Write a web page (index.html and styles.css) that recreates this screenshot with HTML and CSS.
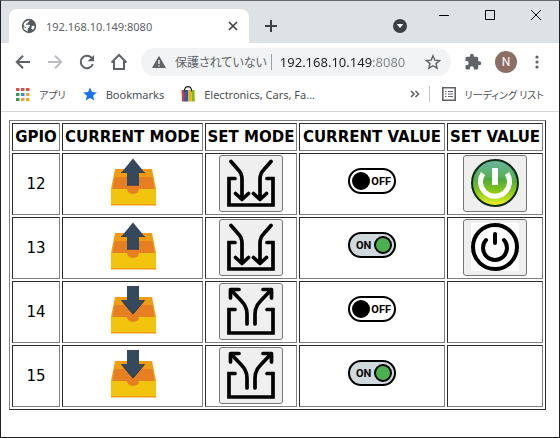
FILE: index.html
```html
<!DOCTYPE html>
<html lang="ja">
<head>
<meta charset="utf-8">
<title>192.168.10.149:8080</title>
<link rel="stylesheet" href="styles.css">
</head>
<body>
<svg class="symbols" aria-hidden="true">
  <symbol id="tray" viewBox="0 0 48 48">
    <path fill="#f39c12" d="M6 11H43L47 31V47.500H2V31Z"/>
    <path fill="#e67e22" d="M5.500 19H43.500L45 31H4Z"/>
    <path fill="#f1c40f" d="M2 31H47V46H2Z"/>
    <path fill="#e67e22" d="M18 31a6 5 0 0 0 12 0Z"/>
  </symbol>
  <symbol id="tray-up" viewBox="0 0 48 48">
    <use href="#tray"/>
    <path fill="#34495e" d="M24 .5L36 15H30V27.500H18V15H12Z"/>
    <path fill="#2c3e50" d="M12 14H18V15H12ZM30 14H36V15H30ZM18 26.500H30V27.500H18Z"/>
  </symbol>
  <symbol id="tray-down" viewBox="0 0 48 48">
    <use href="#tray"/>
    <path fill="#34495e" d="M18 0H30V14H36L24 28.500L12 14H18Z"/>
    <path fill="none" stroke="#2c3e50" d="M12.500 14.500L24 28L35.500 14.500"/>
  </symbol>
  <symbol id="mode-in" viewBox="0 0 48 48">
    <g fill="none" stroke="#000" stroke-width="3.700" stroke-linecap="round" stroke-linejoin="round">
      <path stroke-linejoin="miter" d="M8 19.500H2V46H46V19.500H40"/>
      <path d="M4 2.500L11 10.500Q15 14.500 15 20V40M8.500 34.500L15 40.500L21.500 34.500"/>
      <path d="M44 2.500L37 10.500Q33 14.500 33 20V40M39.500 34.500L33 40.500L26.500 34.500"/>
    </g>
  </symbol>
  <symbol id="mode-out" viewBox="0 0 48 48">
    <g fill="none" stroke="#000" stroke-width="3.700" stroke-linecap="round" stroke-linejoin="round">
      <path stroke-linejoin="miter" d="M8 22.500H2V46H46V22.500H40"/>
      <path d="M12 2.500H3.500V11M4 3L14 13.500Q20 19.500 20 27V37"/>
      <path d="M36 2.500H44.500V11M44 3L34 13.500Q28 19.500 28 27V37"/>
    </g>
  </symbol>
</svg>

<div class="window">
  <header class="tabstrip">
    <div class="tab">
      <svg class="favicon" viewBox="0 0 16 16"><circle cx="8" cy="8" r="7.200" fill="#55595e"/><path fill="#fff" d="M9.500 2.600c-1.200.2-1.800.7-1.700 1.500-.9.200-1.400.7-1.200 1.500H5.200L4.800 6.800H8c1 .2 1.200.9.800 1.600h-1v1.400c-.5.500-1 .7-1.200 1.300l.2 2.300C4 12.800 2.400 11 2.300 8.800l2.700 1.400V9.200H3.900L2.600 7C3 4.500 5.500 2 9.500 2.600ZM11 8c1-.3 1.700-.2 2.600.2-.1 1.600-.8 2.900-1.800 3.700-.3-.7-.6-.9-1.300-.9 0-1.200-.3-2.200.5-3Z"/></svg>
      <span class="tab-title">192.168.10.149:8080</span>
      <button class="icon-button" aria-label="Close tab"><svg width="10" height="10" viewBox="0 0 10 10"><path d="M1 1L9 9M9 1L1 9" stroke="#3c4043" stroke-width="1.600"/></svg></button>
    </div>
    <button class="icon-button new-tab" aria-label="New tab"><svg width="12" height="12" viewBox="0 0 12 12"><path d="M6 0V12M0 6H12" stroke="#3c4043" stroke-width="2"/></svg></button>
    <button class="icon-button tab-search" aria-label="Search tabs"><svg width="14" height="14" viewBox="0 0 14 14"><circle cx="7" cy="7" r="7" fill="#3c4043"/><path d="M3.800 5H10.200L7 9.200Z" fill="#fff"/></svg></button>
    <div class="window-controls">
      <button class="icon-button" aria-label="Minimize"><svg width="10" height="10" viewBox="0 0 10 10"><path d="M0 5.500H10" stroke="#000"/></svg></button>
      <button class="icon-button" aria-label="Maximize"><svg width="10" height="10" viewBox="0 0 10 10"><path d="M.5 .5H9.500V9.500H.5Z" fill="none" stroke="#000"/></svg></button>
      <button class="icon-button" aria-label="Close"><svg width="10" height="10" viewBox="0 0 10 10"><path d="M0 0L10 10M10 0L0 10" stroke="#000"/></svg></button>
    </div>
  </header>

  <nav class="toolbar">
    <button class="icon-button nav-button" aria-label="Back"><svg width="16" height="16" viewBox="0 0 16 16"><path d="M15 8H2M8 1.800L1.800 8L8 14.200" fill="none" stroke="#5f6368" stroke-width="2"/></svg></button>
    <button class="icon-button nav-button" aria-label="Forward" disabled><svg width="16" height="16" viewBox="0 0 16 16"><path d="M1 8H14M8 1.800L14.200 8L8 14.200" fill="none" stroke="#bcbec1" stroke-width="2"/></svg></button>
    <button class="icon-button nav-button" aria-label="Reload"><svg width="16" height="16" viewBox="0 0 16 16"><path d="M13.800 10A6.200 6.200 0 1 1 12.500 3.700" fill="none" stroke="#5f6368" stroke-width="2"/><path d="M15 1V7.300H8.700Z" fill="#5f6368"/></svg></button>
    <button class="icon-button nav-button" aria-label="Home"><svg width="18" height="18" viewBox="0 0 18 18"><path d="M1.500 9.500L9 2L16.500 9.500M4 8V16H14V8" fill="none" stroke="#5f6368" stroke-width="2"/></svg></button>
    <div class="omnibox">
      <svg class="warning" width="14" height="14" viewBox="0 0 14 14"><path d="M7 .8L14 13H0Z" fill="#5f6368"/><path d="M7 5V9M7 10.200V11.600" stroke="#f1f3f4" stroke-width="1.400"/></svg>
      <label class="security" for="address">保護されていない</label>
      <input class="address" id="address" type="text" value="192.168.10.149:8080">
      <button class="icon-button" aria-label="Bookmark this page"><svg width="16" height="16" viewBox="0 0 16 16"><path d="M8 1.700L9.800 6.100L14.600 6.500L11 9.600L12.100 14.200L8 11.700L3.900 14.200L5 9.600L1.400 6.500L6.200 6.100Z" fill="none" stroke="#5f6368" stroke-width="1.400"/></svg></button>
    </div>
    <button class="icon-button nav-button" aria-label="Extensions"><svg width="18" height="18" viewBox="0 0 24 24"><path fill="#5f6368" d="M20.500 11H19V7a2 2 0 0 0-2-2h-4V3.500a2.500 2.500 0 0 0-5 0V5H4a2 2 0 0 0-2 2v3.800h1.500a2.700 2.700 0 0 1 0 5.400H2V20a2 2 0 0 0 2 2h3.800v-1.500a2.700 2.700 0 0 1 5.400 0V22H17a2 2 0 0 0 2-2v-4h1.500a2.500 2.500 0 0 0 0-5Z"/></svg></button>
    <button class="avatar" aria-label="Profile">N</button>
    <button class="icon-button menu-button" aria-label="Menu"><svg width="4" height="14" viewBox="0 0 4 14" fill="#5f6368"><circle cx="2" cy="2" r="1.600"/><circle cx="2" cy="7" r="1.600"/><circle cx="2" cy="12" r="1.600"/></svg></button>
  </nav>

  <nav class="bookmarks">
    <a class="bookmark" href="#apps">
      <svg width="14" height="14" viewBox="0 0 14 14"><path fill="#d9534a" d="M0 1h3.500v3H0ZM5 1h3.500v3H5ZM10 1h3.500v3H10Z"/><path fill="#3a9a5b" d="M0 6h3.500v3H0ZM0 11h3.500v3H0Z"/><path fill="#3f83df" d="M5 6h3.500v3H5Z"/><path fill="#e4ac2d" d="M10 6h3.500v3H10ZM5 11h3.500v3H5ZM10 11h3.500v3H10Z"/></svg>
      <span class="kana">アプリ</span>
    </a>
    <a class="bookmark" href="#bookmarks">
      <svg width="14" height="14" viewBox="0 0 14 14"><path fill="#1a73e8" d="M7 .5L9 5.100L13.800 5.500L10.100 8.700L11.300 13.500L7 10.900L2.700 13.500L3.900 8.700L.2 5.500L5 5.100Z"/></svg>
      <span>Bookmarks</span>
    </a>
    <a class="bookmark" href="#shop">
      <svg width="14" height="16" viewBox="0 0 14 16"><path fill="#d93a3c" d="M.5 4H4V15.500H1Z"/><path fill="#2160b8" d="M3.500 4H7V15.500H3.500Z"/><path fill="#f0ae18" d="M7 4H10.500V15.500H7Z"/><path fill="#86b817" d="M10.500 4H13.500L13.800 15.500H10.500Z"/><path d="M3.500 5.500V4Q4 .7 7 .7T10.500 4V5.500" fill="none" stroke="#222" stroke-width="1.200"/></svg>
      <span>Electronics, Cars, Fa...</span>
    </a>
    <div class="bookmarks-end">
      <button class="icon-button" aria-label="More bookmarks"><svg width="10" height="8" viewBox="0 0 10 8"><path d="M1 1L4 4L1 7M5.500 1L8.500 4L5.500 7" fill="none" stroke="#5f6368" stroke-width="1.600"/></svg></button>
      <a class="bookmark reading-list" href="#reading">
        <svg width="14" height="14" viewBox="0 0 14 14"><path d="M.8 .8H13.200V13.200H.8Z" fill="none" stroke="#5f6368" stroke-width="1.600"/><path d="M3 4.500H4.500M6 4.500H11M3 7H4.500M6 7H11M3 9.500H4.500M6 9.500H11" stroke="#5f6368" stroke-width="1.200"/></svg>
        <span class="kana">リーディング リスト</span>
      </a>
    </div>
  </nav>

  <main class="page">
    <table class="gpio">
      <colgroup><col class="col-gpio"><col class="col-mode"><col class="col-set-mode"><col class="col-value"><col class="col-set-value"></colgroup>
      <thead>
        <tr><th>GPIO</th><th>CURRENT MODE</th><th>SET MODE</th><th>CURRENT VALUE</th><th>SET VALUE</th></tr>
      </thead>
      <tbody>
        <tr>
          <td>12</td>
          <td><svg class="icon" role="img" aria-label="Output"><use href="#tray-up"/></svg></td>
          <td><button class="action" aria-label="Set input"><svg class="icon"><use href="#mode-in"/></svg></button></td>
          <td><span class="state off"><span>OFF</span></span></td>
          <td><button class="action" aria-label="Turn on">
            <svg class="icon" viewBox="0 0 48 48">
              <defs>
                <linearGradient id="green" x1="0" y1="0" x2="0" y2="1"><stop offset="0" stop-color="#2a9478"/><stop offset=".4" stop-color="#47a83c"/><stop offset=".7" stop-color="#8cca16"/><stop offset="1" stop-color="#f1f52b"/></linearGradient>
                <linearGradient id="gloss" x1="0" y1="0" x2="0" y2="1"><stop offset="0" stop-color="#fff" stop-opacity=".3"/><stop offset="1" stop-color="#fff" stop-opacity=".05"/></linearGradient>
              </defs>
              <circle cx="24" cy="24" r="23" fill="url(#green)" stroke="#102a18" stroke-width="2"/>
              <path d="M3 23A21 21 0 0 1 45 23Q24 14 3 23Z" fill="url(#gloss)"/>
              <path d="M12 14.500A14.500 14.500 0 1 0 36 14.500" fill="none" stroke="#fff" stroke-width="5"/>
              <path d="M24 9V26" stroke="#fff" stroke-width="6"/>
            </svg></button></td>
        </tr>
        <tr>
          <td>13</td>
          <td><svg class="icon" role="img" aria-label="Output"><use href="#tray-up"/></svg></td>
          <td><button class="action" aria-label="Set input"><svg class="icon"><use href="#mode-in"/></svg></button></td>
          <td><span class="state on"><span>ON</span></span></td>
          <td><button class="action" aria-label="Turn off">
            <svg class="icon" viewBox="0 0 48 48">
              <path d="M0 0H48V48H0Z" fill="#fff"/>
              <g fill="none" stroke="#000" stroke-width="4" stroke-linecap="round">
                <circle cx="24" cy="24" r="22"/>
                <path d="M15 17A12 12 0 1 0 33 17M24 11V20"/>
              </g>
            </svg></button></td>
        </tr>
        <tr>
          <td>14</td>
          <td><svg class="icon" role="img" aria-label="Input"><use href="#tray-down"/></svg></td>
          <td><button class="action" aria-label="Set output"><svg class="icon"><use href="#mode-out"/></svg></button></td>
          <td><span class="state off"><span>OFF</span></span></td>
          <td></td>
        </tr>
        <tr>
          <td>15</td>
          <td><svg class="icon" role="img" aria-label="Input"><use href="#tray-down"/></svg></td>
          <td><button class="action" aria-label="Set output"><svg class="icon"><use href="#mode-out"/></svg></button></td>
          <td><span class="state on"><span>ON</span></span></td>
          <td></td>
        </tr>
      </tbody>
    </table>
  </main>
</div>
</body>
</html>
```
FILE: styles.css
```css
*, *::before { box-sizing: border-box; }

body {
  margin: 0;
  background: #fff;
  color: #000;
  font-family: "Noto Sans", "Noto Sans CJK JP", sans-serif;
}

.symbols { position: absolute; width: 0; height: 0; }

.window {
  display: flex;
  flex-direction: column;
  min-height: 100vh;
  border: 1px solid #202024;
  border-top-color: #68686d;
}

.icon-button {
  display: flex;
  align-items: center;
  justify-content: center;
  flex: none;
  padding: 0;
  border: 0;
  background: none;
}

/* Tab strip */
.tabstrip {
  display: flex;
  height: 42px;
  padding-left: 8px;
  background: #dee1e6;
}

.tab {
  display: flex;
  align-items: center;
  gap: 9px;
  flex: 0 1 240px;
  margin-top: 8px;
  padding: 0 11px 0 12px;
  border-radius: 8px 8px 0 0;
  background: #fff;
}

.favicon { width: 16px; height: 16px; }

.tab-title {
  flex: 1;
  color: #5f6368;
  font-size: 11px;
}

.new-tab { width: 44px; margin-top: 8px; }

.tab-search { margin: 8px 14px 0 auto; }

.window-controls { display: flex; height: 28px; }
.window-controls .icon-button { width: 46px; }

/* Toolbar */
.toolbar {
  display: flex;
  align-items: center;
  gap: 12px;
  height: 37px;
  padding: 0 14px 0 12px;
}

.nav-button { width: 20px; height: 20px; }

.omnibox {
  display: flex;
  align-items: center;
  flex: 1;
  min-width: 0;
  height: 28px;
  padding: 0 10px 0 11px;
  border-radius: 14px;
  background: #f1f3f4;
}

.warning { flex: none; }

.security {
  flex: none;
  margin-left: 9px;
  color: #5f6368;
  font-family: "Noto Sans CJK JP", sans-serif;
  font-feature-settings: "palt";
  font-size: 12px;
  line-height: 20px;
  white-space: nowrap;
}

.address {
  flex: 1;
  min-width: 0;
  height: 16px;
  margin-left: 4px;
  padding: 0 0 0 8px;
  border: 0;
  border-left: 1px solid #9aa0a6;
  background: linear-gradient(to right, #202124 100px, #80868b 100px);
  -webkit-background-clip: text;
  background-clip: text;
  -webkit-text-fill-color: transparent;
  font: 13px "Noto Sans", sans-serif;
}

.avatar {
  flex: none;
  width: 22px;
  height: 22px;
  padding: 0;
  border: 0;
  border-radius: 50%;
  background: #8d6e63;
  color: #fff;
  font: 12px/22px Roboto, sans-serif;
}

.menu-button { width: 16px; height: 20px; }

/* Bookmarks bar */
.bookmarks {
  display: flex;
  align-items: center;
  gap: 17px;
  height: 32px;
  padding: 0 15px 3px 15px;
  border-bottom: 1px solid #d5d6d8;
}

.bookmark {
  display: flex;
  align-items: center;
  gap: 9px;
  color: #4c5054;
  font-size: 11px;
  text-decoration: none;
  white-space: nowrap;
}

.kana {
  font-family: "Noto Sans CJK JP", sans-serif;
  font-feature-settings: "palt";
  font-size: 10px;
}

.bookmarks-end {
  display: flex;
  align-items: center;
  gap: 9px;
  margin-left: auto;
}

.reading-list {
  height: 16px;
  padding-left: 12px;
  border-left: 1px solid #c4c7ca;
}

/* Page */
.page {
  flex: 1;
  padding: 8px;
  font-family: "DejaVu Sans", sans-serif;
  font-size: 15px;
}

.gpio {
  border: 1px outset gray;
  border-spacing: 2px;
}

.gpio th,
.gpio td {
  padding: 1px;
  border: 1px inset gray;
  text-align: center;
  white-space: nowrap;
}

.gpio th { height: 28px; padding: 0; }
.gpio td { height: 62px; }

.col-gpio { width: 48px; }
.col-mode { width: 141px; }
.col-set-mode { width: 92px; }
.col-value { width: 146px; }
.col-set-value { width: 96px; }

.icon { width: 48px; height: 48px; }

.action {
  display: block;
  width: 64px;
  height: 57px;
  margin: 0 auto 2px;
  padding: 0;
  border: 1px solid #767676;
  border-radius: 3px;
  background: #efefef;
}

.gpio td:has(.action) { padding: 0; }

.action .icon { display: block; margin: 0 auto; }

/* Toggle pictures */
.state {
  display: flex;
  align-items: center;
  justify-content: space-between;
  width: 48px;
  height: 26px;
  margin: 0 auto 6px;
  padding: 0 3px 0 2px;
  border: 2px solid #000;
  border-radius: 13px;
  font: 700 11px Roboto, sans-serif;
}

.state::before {
  content: "";
  flex: none;
  width: 18px;
  height: 18px;
  border: 2px solid #000;
  border-radius: 50%;
  background: #000;
}

.state.on {
  flex-direction: row-reverse;
  padding: 0 2px 0 6px;
  background: #cfd8dc;
}

.state.on::before { background: #4caf50; }
```
